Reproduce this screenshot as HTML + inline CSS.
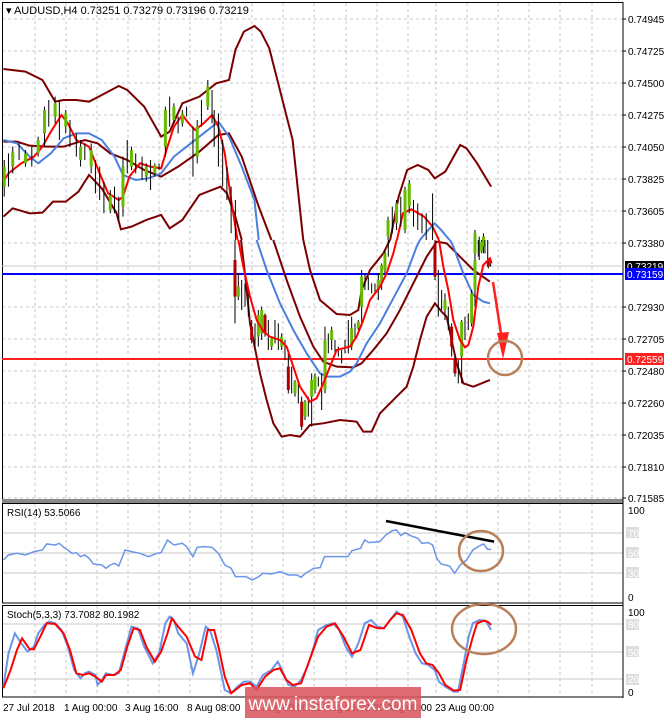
<!DOCTYPE html>
<html><head><meta charset="utf-8"><style>
html,body{margin:0;padding:0;background:#fff;}
svg{display:block;font-family:"Liberation Sans",sans-serif;}
.ns{vector-effect:non-scaling-stroke;fill:none;}
</style></head><body>
<svg width="665" height="718" viewBox="0 0 665 718" xmlns="http://www.w3.org/2000/svg">
<rect width="665" height="718" fill="#fff"/>
<!-- grids -->
<g stroke="#c8c8c8" stroke-width="1" stroke-dasharray="3,3">
<path d="M35 3V500M66 3V500M97 3V500M128 3V500M159 3V500M190 3V500M221 3V500M252 3V500M283 3V500M314 3V500M346 3V500M377 3V500M408 3V500M436 3V500M467 3V500M498 3V500M529 3V500M560 3V500M592 3V500"/>
<path d="M35 504V603M66 504V603M97 504V603M128 504V603M159 504V603M190 504V603M221 504V603M252 504V603M283 504V603M314 504V603M346 504V603M377 504V603M408 504V603M436 504V603M467 504V603M498 504V603M529 504V603M560 504V603M592 504V603"/>
<path d="M35 606V697M66 606V697M97 606V697M128 606V697M159 606V697M190 606V697M221 606V697M252 606V697M283 606V697M314 606V697M346 606V697M377 606V697M408 606V697M436 606V697M467 606V697M498 606V697M529 606V697M560 606V697M592 606V697"/>
<path d="M2 19H623M2 51H623M2 83H623M2 115H623M2 147H623M2 179H623M2 211H623M2 243H623M2 307H623M2 339H623M2 371H623M2 403H623M2 435H623M2 467H623M2 498H623"/>
</g>
<g stroke="#c8c8c8" stroke-width="1"><path d="M2 533H623M2 553H623M2 573H623M2 624H623M2 652H623M2 679H623"/></g>
<!-- frames -->
<rect x="2.5" y="2.5" width="620.5" height="497" fill="none" stroke="#000"/>
<rect x="2" y="499" width="621" height="4" fill="#888"/>
<rect x="2.5" y="503.5" width="620.5" height="99.5" fill="none" stroke="#000"/>
<rect x="2.5" y="605.5" width="620.5" height="91.5" fill="none" stroke="#000"/>
<path d="M623 2V698" stroke="#000"/>
<g stroke="#000"><path d="M623 19h3M623 51h3M623 83h3M623 115h3M623 147h3M623 179h3M623 211h3M623 243h3M623 307h3M623 339h3M623 371h3M623 403h3M623 435h3M623 467h3M623 498h3"/></g>
<!-- horizontal levels -->
<path d="M2 266H623" stroke="#c8c8c8" stroke-width="1"/>
<path d="M2 274H623" stroke="#0000ff" stroke-width="2"/>
<path d="M2 359H623" stroke="#ff2020" stroke-width="2"/>

<!-- upper part from zoom1 coords -->
<g transform="scale(0.4241,0.3333)">
<g stroke="#7a0000" stroke-width="2" class="ns">
<polyline class="ns" points="8,207 60,215 100,240 130,305 150,300 180,300 210,305 240,285 280,258 300,270 340,320 380,410 400,395 430,310 470,290 510,250 540,240 555,150 575,95 600,78 615,95 635,145 660,270 690,420 715,720"/>
<polyline class="ns" points="920,720 940,590 960,510 985,495 1010,510 1025,535 1050,515 1085,435 1100,445 1125,490 1158,560"/>
<polyline class="ns" points="8,425 40,425 70,437 110,440 150,440 200,420 230,430 260,460 300,480 340,510 380,530 420,500 470,455 515,405 540,400 570,470 610,620 640,720"/>
<polyline class="ns" points="8,650 30,625 70,640 100,638 125,605 155,605 185,575 210,525 240,565 275,640 285,688 310,680 345,660 380,645 400,685 430,660 470,585 500,570 520,560 535,580 555,650 570,720"/>
</g>
<polyline class="ns" stroke="#4a7fe0" stroke-width="2" points="8,420 40,430 70,470 90,490 120,460 150,415 180,400 210,400 240,420 270,470 290,525 320,540 350,535 380,520 410,470 440,440 470,410 500,380 515,365 540,410 570,500 600,600 610,720"/>
<polyline class="ns" stroke="#4a7fe0" stroke-width="2" points="990,720 1010,690 1025,670 1040,690 1060,720"/>
<polyline class="ns" stroke="#ff0000" stroke-width="2" points="8,545 20,520 50,490 80,470 100,440 120,395 145,345 160,370 180,420 210,440 235,520 255,580 280,600 290,590 305,530 330,490 355,500 380,505 395,440 410,380 430,345 445,370 460,390 480,370 500,345 515,380 530,460 545,600 560,720"/>
<polyline class="ns" stroke="#ff0000" stroke-width="2" points="936,720 950,640 970,628 1000,650 1020,680 1035,720"/>
<path class="ns" stroke="#000" stroke-width="1" d="M10 480V590M20 460V560M30 440V520M45 430V480M60 450V500M75 440V500M90 410V470M105 320V440M115 300V380M130 290V370M140 300V420M155 330V400M165 360V440M180 400V470M190 420V500M200 430V480M215 430V520M225 480V580M235 500V600M245 545V640M260 570V640M270 560V640M280 590V660M290 470V650M300 420V520M310 440V510M320 460V520M335 470V540M345 490V545M355 480V570M365 490V530M375 490V510M390 320V470M400 290V380M410 310V370M420 350V400M430 330V380M440 320V350M455 380V530M465 360V490M475 300V380M490 240V330M500 270V370M505 330V440M515 340V500M525 420V560M535 500V600M545 560V700M555 600V720M915 650V720M925 620V700M935 600V690M945 590V680M955 560V700M965 540V640M975 600V680M985 610V690M995 640V700M1005 640V720M1020 580V720M1120 690V780M1130 710V780M1140 700V760M1150 720V790"/>
<path class="ns" stroke="#66bb00" stroke-width="3" d="M10 500V560M30 455V500M60 460V490M90 420V460M105 330V400M130 310V350M155 340V380M190 440V480M215 450V500M260 585V630M290 500V620M310 450V500M345 500V530M365 495V520M390 330V440M410 320V360M430 340V370M465 380V470M490 260V320M915 660V710M935 610V670M955 570V690M965 550V620M1120 700V760M1140 710V740"/>
</g>

<!-- lower part from zoom4 coords -->
<g transform="translate(180,240) scale(0.3333)">
<g stroke="#7a0000" stroke-width="2">
<polyline class="ns" points="370,0 390,90 420,180 470,222 510,225 535,210 545,150 570,90 610,40 630,0"/>
<polyline class="ns" points="280,0 320,120 360,230 400,320 430,365 470,380 520,382 545,370 580,330 620,280 660,210 700,130 740,50 770,5 800,10 840,50 880,90 930,125"/>
<polyline class="ns" points="183,0 195,100 210,250 240,400 260,480 280,550 305,590 330,585 360,590 390,555 430,550 480,540 530,545 550,575 575,575 600,520 630,490 660,460 680,440 700,380 720,300 740,230 765,190 785,215 800,230 815,300 830,370 850,430 880,440 930,420"/>
</g>
<polyline class="ns" stroke="#4a7fe0" stroke-width="2" points="230,0 260,90 300,190 340,270 380,340 420,400 440,410 480,410 510,395 530,370 560,310 600,250 640,175 680,100 710,20 720,0"/>
<polyline class="ns" stroke="#4a7fe0" stroke-width="2" points="810,0 820,20 850,100 880,165 910,185 930,190"/>
<path class="ns" stroke="#000" stroke-width="1" d="M165 0V250M175 100V180M185 120V210M195 130V200M205 150V230M215 240V310M225 250V320M235 210V320M245 200V300M255 220V290M265 240V330M275 290V330M285 240V310M295 250V330M305 280V330M315 300V360M325 330V460M335 380V460M345 420V470M355 430V490M365 470V570M375 480V540M385 470V530M395 400V560M405 400V460M415 410V440M425 400V510M435 260V460M445 280V340M455 260V330M465 300V340M475 320V350M485 330V370M495 300V340M505 240V340M515 230V330M525 250V300M535 240V270M545 90V260M555 100V150M565 110V150M575 130V160M585 130V160M595 100V180M605 70V150M615 30V100M625 0V50M765 0V120M775 90V230M785 150V210M795 160V240M805 200V270M815 250V350M825 350V410M835 360V430M845 240V430M855 230V300M865 220V270M875 150V260M885 40V200M895 0V50M905 0V40M915 0V40M925 55V85M932 60V80"/>
<path class="ns" stroke="#66bb00" stroke-width="3" d="M175 140V170M235 225V290M245 210V280M275 295V320M305 290V320M345 425V460M375 485V530M395 420V470M405 410V450M435 300V450M455 270V300M515 265V320M535 245V265M545 110V200M595 120V150M605 75V130M615 40V90M795 180V210M845 245V350M875 160V250M885 60V150M905 5V35"/>
<path class="ns" stroke="#b00000" stroke-width="3" d="M165 60V170M215 260V300M255 225V280M325 380V450M365 485V560M765 10V110M815 260V320M825 360V400M925 60V80"/>
<polyline class="ns" stroke="#ff0000" stroke-width="2" points="175,0 190,80 210,170 230,240 250,275 270,290 300,300 320,320 340,380 360,440 390,485 410,475 430,430 450,380 470,330 490,325 510,320 530,290 550,240 570,180 600,140 620,100 640,40 650,0"/>
<polyline class="ns" stroke="#ff0000" stroke-width="2" points="777,0 790,80 805,150 820,240 840,300 855,322 865,315 880,260 895,140 910,75 930,55 935,70"/>
</g>

<!-- arrow and circle -->
<path d="M493 282L502 340" stroke="#ff2020" stroke-width="2.5" fill="none"/>
<path d="M497 333L509 332L503 359Z" fill="#ff2020"/>
<ellipse cx="505" cy="358" rx="17" ry="17" fill="none" stroke="#b8805a" stroke-width="2.5"/>

<!-- price labels -->
<g font-size="10" fill="#000">
<text x="628" y="23">0.74945</text><text x="628" y="55">0.74725</text><text x="628" y="87">0.74500</text><text x="628" y="119">0.74275</text><text x="628" y="151">0.74050</text><text x="628" y="183">0.73825</text><text x="628" y="215">0.73605</text><text x="628" y="247">0.73380</text><text x="628" y="311">0.72930</text><text x="628" y="343">0.72705</text><text x="628" y="375">0.72480</text><text x="628" y="407">0.72260</text><text x="628" y="439">0.72035</text><text x="628" y="471">0.71810</text><text x="628" y="502">0.71585</text>
</g>
<rect x="625" y="261" width="39" height="10" fill="#000"/>
<text x="627" y="270" font-size="10" fill="#fff">0.73219</text>
<rect x="625" y="268" width="39" height="12" fill="#0000ff"/>
<text x="627" y="278" font-size="10" fill="#fff">0.73159</text>
<rect x="625" y="353" width="39" height="12" fill="#ff2020"/>
<text x="627" y="363" font-size="10" fill="#fff">0.72559</text>

<text x="6" y="14" font-size="11" fill="#000">▾ AUDUSD,H4  0.73251 0.73279 0.73196 0.73219</text>

<!-- RSI -->
<text x="7" y="516" font-size="10" fill="#000">RSI(14) 53.5066</text>
<g font-size="10"><text x="628" y="514" fill="#000">100</text><rect x="626" y="527" width="13" height="11" fill="#ddd"/><text x="628" y="537" fill="#fff">70</text><rect x="626" y="547" width="13" height="11" fill="#ddd"/><text x="628" y="557" fill="#fff">50</text><rect x="626" y="567" width="13" height="11" fill="#ddd"/><text x="628" y="577" fill="#fff">30</text><text x="628" y="601" fill="#000">0</text></g>
<g transform="translate(0,360) scale(0.4241,0.3333)">
<polyline class="ns" stroke="#6a95e8" stroke-width="1.5" points="8,600 20,585 40,580 60,585 80,575 100,570 110,552 130,555 140,550 150,562 160,570 170,580 180,578 190,590 200,585 210,595 220,612 240,615 250,625 260,615 270,610 280,618 295,570 310,575 330,580 350,590 370,580 380,578 395,540 410,555 430,550 440,560 455,590 465,562 480,560 500,562 515,580 530,615 545,625 555,650 580,650 595,660 610,650 620,640 640,642 660,635 680,645 700,645 710,652 720,640 740,625 755,623 765,590 790,590 820,590 830,572 850,565 860,540 870,548 895,545 910,525 925,512 935,510 945,527 955,518 970,528 985,535 995,550 1010,548 1020,555 1030,595 1040,612 1060,618 1072,640 1085,615 1100,600 1115,570 1130,558 1140,552 1150,568 1158,568"/>
<path class="ns" stroke="#000" stroke-width="2.5" d="M910 483L1165 545"/>
<polyline class="ns" stroke="#6a95e8" stroke-width="2" points="8,980 20,880 35,820 50,850 65,875 80,860 90,820 105,795 115,785 130,790 145,810 160,860 175,930 190,955 200,940 210,935 225,945 230,975 240,960 250,940 265,945 280,940 295,870 310,800 325,805 340,860 360,910 375,880 390,790 400,770 410,780 420,820 440,850 455,940 470,880 485,800 495,810 510,870 520,930 530,990 545,1000 560,980 575,965 590,965 605,980 620,945 640,930 655,905 665,930 680,975 695,980 710,960 725,920 740,860 750,810 770,795 785,790 800,810 815,860 830,890 845,850 860,790 875,780 890,800 905,805 920,780 935,755 950,770 965,830 980,880 995,910 1010,915 1025,930 1035,965 1050,980 1070,995 1080,995 1095,900 1105,830 1115,790 1130,780 1145,782 1158,810"/>
<polyline class="ns" stroke="#ff0000" stroke-width="2" points="8,985 25,930 40,870 52,835 70,868 80,868 95,830 110,790 130,792 150,820 165,870 180,940 195,945 210,940 225,950 240,965 250,945 270,945 285,930 300,860 315,805 330,810 345,860 365,905 380,875 395,820 405,775 420,800 440,830 460,890 475,900 490,810 505,810 515,860 530,950 545,1000 570,975 590,970 605,990 625,950 645,930 660,925 675,960 690,975 710,970 730,900 750,830 770,800 790,790 810,830 830,880 850,870 870,795 890,805 905,805 920,780 935,760 950,765 970,810 990,880 1005,910 1020,915 1035,940 1050,975 1070,992 1085,990 1100,900 1115,830 1125,790 1140,782 1150,785 1158,795"/>
</g>
<ellipse cx="481" cy="551" rx="22" ry="20" fill="none" stroke="#b8805a" stroke-width="2.5"/>

<!-- Stoch -->
<text x="7" y="618" font-size="10" fill="#000">Stoch(5,3,3) 73.7082 80.1982</text>
<g font-size="10"><text x="628" y="616" fill="#000">100</text><rect x="626" y="619" width="13" height="11" fill="#ddd"/><text x="628" y="628" fill="#fff">80</text><rect x="626" y="646" width="13" height="11" fill="#ddd"/><text x="628" y="656" fill="#fff">50</text><rect x="626" y="674" width="13" height="11" fill="#ddd"/><text x="628" y="683" fill="#fff">20</text><text x="628" y="696" fill="#000">0</text></g>
<ellipse cx="484" cy="629" rx="32" ry="25" fill="none" stroke="#b8805a" stroke-width="2.5"/>

<!-- time axis -->
<g font-size="10" fill="#000">
<text x="3" y="711">27 Jul 2018</text><text x="64" y="711">1 Aug 00:00</text><text x="125" y="711">3 Aug 16:00</text><text x="187" y="711">8 Aug 08:00</text><text x="249" y="711">13 Aug 00:00</text><text x="311" y="711">15 Aug 16:00</text><text x="373" y="711">20 Aug 08:00</text><text x="435" y="711">23 Aug 00:00</text>
</g>
<rect x="245" y="687" width="176" height="31" fill="#d9585f" fill-opacity="0.88"/>
<text x="333" y="710" font-size="19" fill="#fff" text-anchor="middle">www.instaforex.com</text>
</svg>
</body></html>
